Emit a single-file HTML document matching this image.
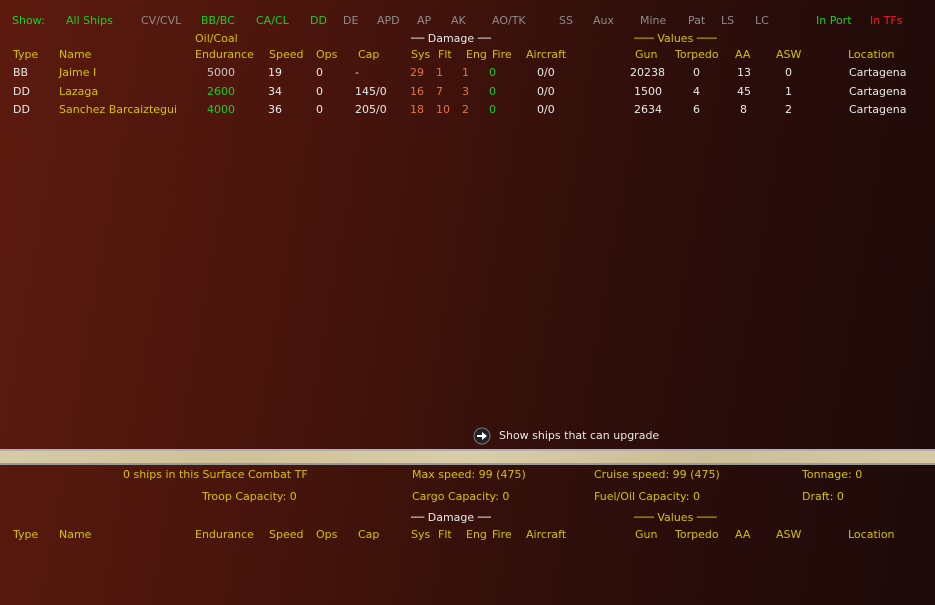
<html><head><style>
body{margin:0;width:935px;height:605px;overflow:hidden;position:relative;font-family:"DejaVu Sans","Liberation Sans",sans-serif;font-size:11px;letter-spacing:0;
background:linear-gradient(100deg,#5c1a0e 0%,#4a150c 30%,#2e0e0a 65%,#1c0a09 100%);}
span{position:absolute;white-space:nowrap;line-height:13px}
.g{color:#22cc22}.a{color:#8c8c8c}.y{color:#d4c200}.w{color:#e8e8e8}.o{color:#e2743c}.r{color:#ee2020}
.bar{position:absolute;left:0;top:449px;width:935px;height:16px;background:linear-gradient(90deg,#d6caa6,#cfc198,#d9cda9,#cbbd95,#d6caa6);border-top:2px solid #b0b0b0;border-bottom:2px solid #9a9a9a;box-sizing:border-box}
</style></head><body>
<span class="g" style="left:12px;top:14px">Show:</span>
<span class="g" style="left:66px;top:14px">All Ships</span>
<span class="a" style="left:141px;top:14px">CV/CVL</span>
<span class="g" style="left:201px;top:14px">BB/BC</span>
<span class="g" style="left:256px;top:14px">CA/CL</span>
<span class="g" style="left:310px;top:14px">DD</span>
<span class="a" style="left:343px;top:14px">DE</span>
<span class="a" style="left:377px;top:14px">APD</span>
<span class="a" style="left:417px;top:14px">AP</span>
<span class="a" style="left:451px;top:14px">AK</span>
<span class="a" style="left:492px;top:14px">AO/TK</span>
<span class="a" style="left:559px;top:14px">SS</span>
<span class="a" style="left:593px;top:14px">Aux</span>
<span class="a" style="left:640px;top:14px">Mine</span>
<span class="a" style="left:688px;top:14px">Pat</span>
<span class="a" style="left:721px;top:14px">LS</span>
<span class="a" style="left:755px;top:14px">LC</span>
<span class="g" style="left:816px;top:14px">In Port</span>
<span class="r" style="left:870px;top:14px">In TFs</span>

<span class="y" style="left:195px;top:32px">Oil/Coal</span>
<span class="w" style="left:411px;top:32px">── Damage ──</span>
<span class="y" style="left:634px;top:32px">─── Values ───</span>

<span class="y" style="left:13px;top:48px">Type</span>
<span class="y" style="left:59px;top:48px">Name</span>
<span class="y" style="left:195px;top:48px">Endurance</span>
<span class="y" style="left:269px;top:48px">Speed</span>
<span class="y" style="left:316px;top:48px">Ops</span>
<span class="y" style="left:358px;top:48px">Cap</span>
<span class="y" style="left:411px;top:48px">Sys</span>
<span class="y" style="left:438px;top:48px">Flt</span>
<span class="y" style="left:466px;top:48px">Eng</span>
<span class="y" style="left:492px;top:48px">Fire</span>
<span class="y" style="left:526px;top:48px">Aircraft</span>
<span class="y" style="left:635px;top:48px">Gun</span>
<span class="y" style="left:675px;top:48px">Torpedo</span>
<span class="y" style="left:735px;top:48px">AA</span>
<span class="y" style="left:776px;top:48px">ASW</span>
<span class="y" style="left:848px;top:48px">Location</span>

<span class="w" style="left:13px;top:66px">BB</span><span class="y" style="left:59px;top:66px">Jaime I</span><span class="a" style="left:207px;top:66px;color:#c8c8c8">5000</span><span class="w" style="left:268px;top:66px">19</span><span class="w" style="left:316px;top:66px">0</span><span class="w" style="left:355px;top:66px">-</span><span class="o" style="left:410px;top:66px">29</span><span class="o" style="left:436px;top:66px">1</span><span class="o" style="left:462px;top:66px">1</span><span class="g" style="left:489px;top:66px">0</span><span class="w" style="left:537px;top:66px">0/0</span><span class="w" style="left:630px;top:66px">20238</span><span class="w" style="left:693px;top:66px">0</span><span class="w" style="left:737px;top:66px">13</span><span class="w" style="left:785px;top:66px">0</span><span class="w" style="left:849px;top:66px">Cartagena</span>

<span class="w" style="left:13px;top:85px">DD</span><span class="y" style="left:59px;top:85px">Lazaga</span><span class="g" style="left:207px;top:85px">2600</span><span class="w" style="left:268px;top:85px">34</span><span class="w" style="left:316px;top:85px">0</span><span class="w" style="left:355px;top:85px">145/0</span><span class="o" style="left:410px;top:85px">16</span><span class="o" style="left:436px;top:85px">7</span><span class="o" style="left:462px;top:85px">3</span><span class="g" style="left:489px;top:85px">0</span><span class="w" style="left:537px;top:85px">0/0</span><span class="w" style="left:634px;top:85px">1500</span><span class="w" style="left:693px;top:85px">4</span><span class="w" style="left:737px;top:85px">45</span><span class="w" style="left:785px;top:85px">1</span><span class="w" style="left:849px;top:85px">Cartagena</span>

<span class="w" style="left:13px;top:103px">DD</span><span class="y" style="left:59px;top:103px">Sanchez Barcaiztegui</span><span class="g" style="left:207px;top:103px">4000</span><span class="w" style="left:268px;top:103px">36</span><span class="w" style="left:316px;top:103px">0</span><span class="w" style="left:355px;top:103px">205/0</span><span class="o" style="left:410px;top:103px">18</span><span class="o" style="left:436px;top:103px">10</span><span class="o" style="left:462px;top:103px">2</span><span class="g" style="left:489px;top:103px">0</span><span class="w" style="left:537px;top:103px">0/0</span><span class="w" style="left:634px;top:103px">2634</span><span class="w" style="left:693px;top:103px">6</span><span class="w" style="left:740px;top:103px">8</span><span class="w" style="left:785px;top:103px">2</span><span class="w" style="left:849px;top:103px">Cartagena</span>

<svg style="position:absolute;left:473px;top:427px" width="18" height="18"><circle cx="9" cy="9" r="8" fill="#222" stroke="#777"/><path d="M4 8h5V5l5 4-5 4v-3H4z" fill="#fff"/></svg>
<span class="w" style="left:499px;top:429px">Show ships that can upgrade</span>
<div class="bar"></div>

<span class="y" style="left:123px;top:468px">0 ships in this Surface Combat TF</span>
<span class="y" style="left:412px;top:468px">Max speed: 99 (475)</span>
<span class="y" style="left:594px;top:468px">Cruise speed: 99 (475)</span>
<span class="y" style="left:802px;top:468px">Tonnage: 0</span>
<span class="y" style="left:202px;top:490px">Troop Capacity: 0</span>
<span class="y" style="left:412px;top:490px">Cargo Capacity: 0</span>
<span class="y" style="left:594px;top:490px">Fuel/Oil Capacity: 0</span>
<span class="y" style="left:802px;top:490px">Draft: 0</span>
<span class="w" style="left:411px;top:511px">── Damage ──</span>
<span class="y" style="left:634px;top:511px">─── Values ───</span>

<span class="y" style="left:13px;top:528px">Type</span>
<span class="y" style="left:59px;top:528px">Name</span>
<span class="y" style="left:195px;top:528px">Endurance</span>
<span class="y" style="left:269px;top:528px">Speed</span>
<span class="y" style="left:316px;top:528px">Ops</span>
<span class="y" style="left:358px;top:528px">Cap</span>
<span class="y" style="left:411px;top:528px">Sys</span>
<span class="y" style="left:438px;top:528px">Flt</span>
<span class="y" style="left:466px;top:528px">Eng</span>
<span class="y" style="left:492px;top:528px">Fire</span>
<span class="y" style="left:526px;top:528px">Aircraft</span>
<span class="y" style="left:635px;top:528px">Gun</span>
<span class="y" style="left:675px;top:528px">Torpedo</span>
<span class="y" style="left:735px;top:528px">AA</span>
<span class="y" style="left:776px;top:528px">ASW</span>
<span class="y" style="left:848px;top:528px">Location</span>
</body></html>
